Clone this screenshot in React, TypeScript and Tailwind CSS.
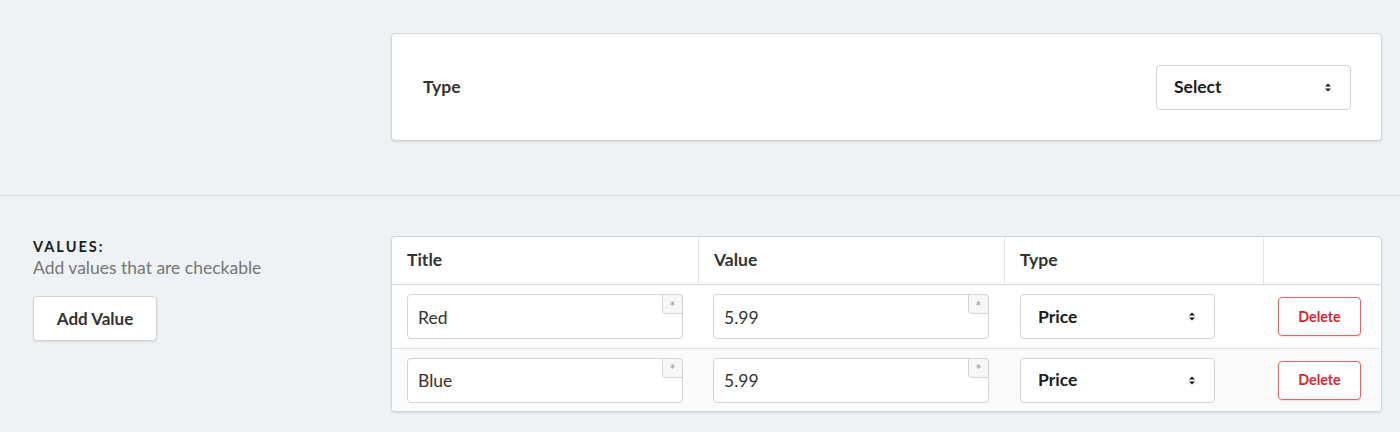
import React from "react";

function Arrows() {
  return (
    <svg width="6" height="9" viewBox="0 0 6 9" className="shrink-0">
      <path d="M0 3.5 L3 0.5 L6 3.5 Z" fill="#1b1c1d" />
      <path d="M0 5.5 L3 8.5 L6 5.5 Z" fill="#1b1c1d" />
    </svg>
  );
}

function SelectBox({ label, w }: { label: string; w: string }) {
  return (
    <div
      className={`${w} h-[45px] bg-white border border-[#d4d4d5] rounded-[4px] flex items-center justify-between pl-[17px] pr-[19px] text-[17.5px] font-bold text-[#1b1c1d]`}
    >
      <span className="pt-[1px]">{label}</span>
      <Arrows />
    </div>
  );
}

function CornerInput({ value }: { value: string }) {
  return (
    <div className="relative w-full h-[45px] bg-white border border-[#d4d4d5] rounded-[4px] flex items-center pl-[10px] text-[17.5px] text-[#333]">
      <span className="pt-[3px]">{value}</span>
      <div className="absolute top-[-1px] right-[-1px] w-[21px] h-[20px] bg-[#f7f7f7] border border-[#d4d4d5] rounded-bl-[4px] rounded-tr-[4px] flex items-center justify-center text-[15px] text-[#9a9a9a] leading-none pt-[4px]">
        *
      </div>
    </div>
  );
}

function DeleteBtn() {
  return (
    <div className="w-[83px] h-[39px] bg-white border border-[#e06565] rounded-[4px] flex items-center justify-center text-[14.3px] font-bold text-[#d0282e] shadow-[0_1px_2px_rgba(34,36,38,0.12)]">
      Delete
    </div>
  );
}

function Row({ title, value, striped }: { title: string; value: string; striped?: boolean }) {
  return (
    <div
      className={`grid grid-cols-[307px_306px_259px_1fr] items-center ${
        striped ? "bg-[#fafafb] h-[62px]" : "bg-white h-[64px] border-b border-[#e3e4e5]"
      }`}
    >
      <div className="pl-[15px] pr-[16px]">
        <CornerInput value={title} />
      </div>
      <div className="pl-[14px] pr-[16px]">
        <CornerInput value={value} />
      </div>
      <div className="pl-[15px]">
        <SelectBox label="Price" w="w-[195px]" />
      </div>
      <div className="pl-[14px]">
        <DeleteBtn />
      </div>
    </div>
  );
}

export default function App() {
  return (
    <div
      className="w-[1400px] h-[432px] bg-[#eff2f5] overflow-hidden"
      style={{ fontFamily: "Lato, 'Liberation Sans', sans-serif" }}
    >
      {/* Top section */}
      <div className="h-[196px] border-b border-[#dcdfe3] flex pt-[33px]">
        <div className="w-[391px] shrink-0" />
        <div className="flex-1 pr-[18px]">
          <div className="h-[108px] bg-white border border-[#d4d4d5] rounded-[4px] shadow-[0_1px_2px_rgba(34,36,38,0.12)] flex items-center justify-between pl-[31px] pr-[30px]">
            <span className="text-[17.5px] font-bold text-[#333] pt-[1px]">Type</span>
            <SelectBox label="Select" w="w-[195px]" />
          </div>
        </div>
      </div>

      {/* Bottom section */}
      <div className="flex pt-[40px]">
        <div className="w-[391px] shrink-0 pl-[33px] pt-[2px]">
          <div className="text-[14.5px] leading-[18px] font-bold tracking-[0.14em] text-[#1b1c1d]">VALUES:</div>
          <div className="text-[17.5px] leading-[22px] text-[#767676] pt-[1px]">Add values that are checkable</div>
          <div className="mt-[17px] w-[124px] h-[45px] bg-white border border-[#d4d4d5] rounded-[4px] shadow-[0_1px_2px_rgba(34,36,38,0.12)] flex items-center justify-center text-[17px] font-bold text-[#333]">
            Add Value
          </div>
        </div>
        <div className="flex-1 pr-[18px]">
          <div className="bg-white border border-[#d4d4d5] rounded-[4px] shadow-[0_1px_2px_rgba(34,36,38,0.12)] overflow-hidden">
            <div className="grid grid-cols-[307px_306px_259px_1fr] h-[48px] border-b border-[#dadbdc] text-[17.5px] font-bold text-[#333]">
              <div className="border-r border-[#e3e4e5] flex items-center pl-[15px]">Title</div>
              <div className="border-r border-[#e3e4e5] flex items-center pl-[15px]">Value</div>
              <div className="border-r border-[#e3e4e5] flex items-center pl-[15px]">Type</div>
              <div />
            </div>
            <Row title="Red" value="5.99" />
            <Row title="Blue" value="5.99" striped />
          </div>
        </div>
      </div>
    </div>
  );
}
